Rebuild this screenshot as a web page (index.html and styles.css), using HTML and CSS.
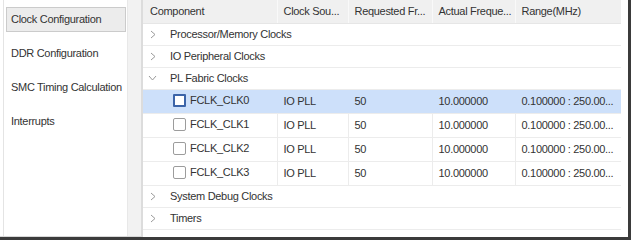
FILE: index.html
```html
<!DOCTYPE html>
<html>
<head>
<meta charset="utf-8">
<link rel="stylesheet" href="styles.css">
</head>
<body>
<div class="window">
  <aside class="sidebar">
    <nav class="nav">
      <div class="nav-item active">Clock Configuration</div>
      <div class="nav-item">DDR Configuration</div>
      <div class="nav-item">SMC Timing Calculation</div>
      <div class="nav-item">Interrupts</div>
    </nav>
  </aside>
  <div class="splitter"></div>
  <main class="content">
    <table class="grid">
      <colgroup>
        <col class="c1"><col class="c2"><col class="c3"><col class="c4"><col class="c5">
      </colgroup>
      <thead>
        <tr>
          <th>Component</th>
          <th>Clock Sou...</th>
          <th>Requested Fr...</th>
          <th>Actual Freque...</th>
          <th>Range(MHz)</th>
        </tr>
      </thead>
      <tbody>
        <tr class="group"><td colspan="5"><svg class="chev" width="6" height="9" viewBox="0 0 6 9"><path d="M1 1 L5 4.5 L1 8" fill="none" stroke="#9a9a9a" stroke-width="1"/></svg>Processor/Memory Clocks</td></tr>
        <tr class="group"><td colspan="5"><svg class="chev" width="6" height="9" viewBox="0 0 6 9"><path d="M1 1 L5 4.5 L1 8" fill="none" stroke="#9a9a9a" stroke-width="1"/></svg>IO Peripheral Clocks</td></tr>
        <tr class="group"><td colspan="5"><svg class="chev" width="9" height="6" viewBox="0 0 9 6"><path d="M1 1 L4.5 5 L8 1" fill="none" stroke="#9a9a9a" stroke-width="1"/></svg>PL Fabric Clocks</td></tr>
        <tr class="item selected"><td><span class="cb focus"></span>FCLK_CLK0</td><td>IO PLL</td><td>50</td><td>10.000000</td><td>0.100000 : 250.00...</td></tr>
        <tr class="item"><td><span class="cb"></span>FCLK_CLK1</td><td>IO PLL</td><td>50</td><td>10.000000</td><td>0.100000 : 250.00...</td></tr>
        <tr class="item"><td><span class="cb"></span>FCLK_CLK2</td><td>IO PLL</td><td>50</td><td>10.000000</td><td>0.100000 : 250.00...</td></tr>
        <tr class="item"><td><span class="cb"></span>FCLK_CLK3</td><td>IO PLL</td><td>50</td><td>10.000000</td><td>0.100000 : 250.00...</td></tr>
        <tr class="group"><td colspan="5"><svg class="chev" width="6" height="9" viewBox="0 0 6 9"><path d="M1 1 L5 4.5 L1 8" fill="none" stroke="#9a9a9a" stroke-width="1"/></svg>System Debug Clocks</td></tr>
        <tr class="group"><td colspan="5"><svg class="chev" width="6" height="9" viewBox="0 0 6 9"><path d="M1 1 L5 4.5 L1 8" fill="none" stroke="#9a9a9a" stroke-width="1"/></svg>Timers</td></tr>
      </tbody>
    </table>
  </main>
</div>
</body>
</html>
```

FILE: styles.css
```css
html, body {
  margin: 0;
  padding: 0;
  background: #ffffff;
}
body {
  font-family: "Liberation Sans", Arial, sans-serif;
  font-size: 11px;
  letter-spacing: -0.3px;
  color: #333333;
}
.window {
  display: flex;
  width: 628px;
  height: 237px;
  border-right: 3px solid #3b3b3b;
  border-bottom: 3px solid #3b3b3b;
  box-shadow: inset 0 -1px 0 #d8d8d8;
  background: #ffffff;
}
.sidebar {
  width: 128px;
  flex: none;
  padding-left: 3px;
  box-sizing: border-box;
  display: flex;
}
.nav {
  flex: 1;
  border-left: 1px solid #e4e4e4;
  border-right: 1px solid #e4e4e4;
  padding: 7px 0 0 2px;
  display: flex;
  flex-direction: column;
  gap: 9px;
  margin-bottom: 1px;
}
.nav-item {
  width: 120px;
  height: 25px;
  box-sizing: border-box;
  border: 1px solid transparent;
  padding-left: 4px;
  line-height: 23px;
  white-space: nowrap;
}
.nav-item.active {
  background: #ececec;
  border-color: #cbcbcb;
}
.splitter {
  width: 13px;
  flex: none;
  background: #f2f2f2;
  border-left: 1px solid #e8e8e8;
  border-right: 2px solid #dcdcdc;
  box-sizing: content-box;
  margin-left: -1px;
  margin-bottom: 1px;
}
.content {
  flex: 1;
  padding-right: 7px;
  background: #ffffff;
}
.grid {
  border-collapse: collapse;
  table-layout: fixed;
  width: 478px;
}
col.c1 { width: 134px; }
col.c2 { width: 71px; }
col.c3 { width: 84px; }
col.c4 { width: 83px; }
col.c5 { width: 106px; }
.grid th {
  height: 23px;
  padding: 0 0 0 6px;
  background: #f0f0f0;
  font-weight: normal;
  text-align: left;
  white-space: nowrap;
  overflow: hidden;
  border-right: 1px solid #f9f9f9;
  border-bottom: 1px solid #e6e6e6;
  box-sizing: border-box;
}
.grid th:first-child { padding-left: 7px; }
.grid th:last-child { border-right: none; }
.grid td {
  padding: 0 0 0 6px;
  white-space: nowrap;
  overflow: hidden;
  border-bottom: 1px solid #ececec;
}
.group td {
  height: 21px;
  padding-left: 7px;
}
.chev {
  display: inline-block;
  vertical-align: middle;
  margin-right: 14px;
  position: relative;
  top: -1px;
}
.group td svg[width="9"] {
  margin-left: -2px;
  margin-right: 13px;
}
.item td {
  height: 23px;
  border-right: 1px solid #ececec;
}
.item td:first-child {
  padding-left: 30px;
}
.item td:last-child {
  border-right: none;
}
.item.selected td {
  background: #cde0fa;
  border-right-color: #cde0fa;
}
.cb {
  display: inline-block;
  width: 13px;
  height: 13px;
  box-sizing: border-box;
  border: 1px solid #9c9c9c;
  border-radius: 2px;
  background: #ffffff;
  vertical-align: middle;
  margin-right: 4px;
  position: relative;
  top: -1px;
}
.cb.focus {
  border: 2px solid #3c64a8;
  border-radius: 1px;
}
```
